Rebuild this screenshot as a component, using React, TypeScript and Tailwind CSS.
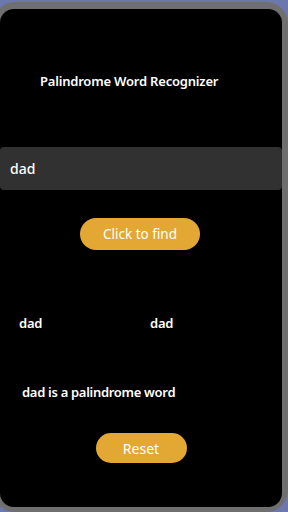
import * as React from "react";

export default function App() {
  const [word, setWord] = React.useState("dad");
  const reversed = word.split("").reverse().join("");

  return (
    <div className="h-[512px] w-[288px] overflow-hidden bg-[#6c77ae] pt-[2px]">
      <div className="ml-[-7px] h-[510px] w-[295px] rounded-[22px] bg-[#6f6f6f] pb-[5px] pl-[7px] pr-[6px] pt-[7px]">
        <div
          className="flex h-[498px] w-[282px] flex-col rounded-[14px] bg-black pt-[63px] text-white"
          style={{ fontFamily: '"Noto Sans", "Open Sans", sans-serif' }}
        >
          <h1 className="pl-[40px] text-[13px] font-semibold leading-[18px] tracking-[-0.2px]">
            Palindrome Word Recognizer
          </h1>

          <input
            value={word}
            onChange={(e) => setWord(e.target.value)}
            className="mt-[57px] h-[43px] w-full rounded-[4px] bg-[#313131] pl-[10px] text-[14px] font-medium text-white outline-none"
          />

          <button className="mx-auto mt-[28px] h-[32px] w-[120px] translate-x-[-1px] rounded-full bg-[#e3a734] text-[13.5px] text-white">
            Click to find
          </button>

          <div className="mt-[64px] flex text-[13px] font-semibold leading-[18px] tracking-[-0.2px]">
            <span className="w-[150px] pl-[19px]">{word}</span>
            <span>{reversed}</span>
          </div>

          <p className="mt-[51px] pl-[22px] text-[13px] font-semibold leading-[18px] tracking-[-0.3px]">
            {word === reversed
              ? `${word} is a palindrome word`
              : `${word} is not a palindrome word`}
          </p>

          <button className="mx-auto mt-[32px] h-[30px] w-[91px] rounded-full bg-[#e3a734] text-[14px] text-white">
            Reset
          </button>
        </div>
      </div>
    </div>
  );
}
